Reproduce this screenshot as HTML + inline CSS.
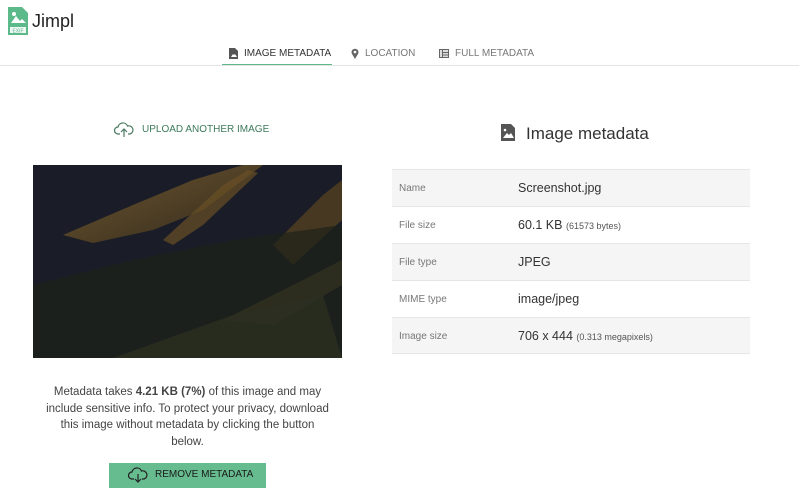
<!DOCTYPE html>
<html><head><meta charset="utf-8"><style>
*{margin:0;padding:0;box-sizing:border-box}
body{width:799px;height:500px;background:#fff;font-family:"Liberation Sans",sans-serif;position:relative;overflow:hidden;color:#333}
.abs{position:absolute}
.tab{position:absolute;top:48px;font-size:10px;color:#777;display:flex;align-items:center;gap:6px}
.row{position:absolute;left:392px;width:358px;height:37px;border-top:1px solid #e6e6e6;font-size:12.5px;color:#333}
.row.g{background:#f5f5f5}
.row .k{position:absolute;left:7px;top:13px;font-size:10px;color:#777}
.row .v{position:absolute;left:126px;top:11px}
.row small{font-size:9px;color:#555}
</style></head><body>
<svg class="abs" style="left:8px;top:7px" width="20" height="28" viewBox="0 0 20 28"><path d="M0 0h14l6 6v22H0z" fill="#5cb98a"/><path d="M3 16l5-7 4 5 2-2 4 4z" fill="#fff"/><circle cx="6" cy="7" r="2" fill="#fff"/><rect x="2" y="20" width="16" height="6" fill="#fff" opacity=".9"/><text x="10" y="25.3" font-size="5" text-anchor="middle" fill="#5cb98a" font-family="Liberation Sans">EXIF</text></svg>
<div class="abs" style="left:32px;top:11px;font-size:18px;color:#222">Jimpl</div>
<div class="tab" style="left:229px;color:#333"><svg width="9" height="11"><path d="M0 0h6l3 3v8H0z" fill="#555"/><path d="M2 9l2-3 1 1 1-1 2 3z" fill="#fff"/></svg>IMAGE METADATA</div>
<div class="abs" style="left:222px;top:64px;width:110px;height:2px;background:#5cb98a"></div>
<div class="tab" style="left:351px"><svg width="8" height="11"><path d="M4 11L1 6a3.5 3.5 0 1 1 6 0z" fill="#666"/><circle cx="4" cy="4" r="1.3" fill="#fff"/></svg>LOCATION</div>
<div class="tab" style="left:439px"><svg width="10" height="9"><rect width="10" height="9" fill="#666"/><rect x="1" y="1" width="2" height="7" fill="#ddd"/><rect x="4" y="1" width="5" height="2" fill="#ddd"/><rect x="4" y="4" width="5" height="1.5" fill="#ddd"/><rect x="4" y="6.5" width="5" height="1.5" fill="#ddd"/></svg>FULL METADATA</div>
<div class="abs" style="left:0;top:65px;width:799px;height:1px;background:#e5e5e5"></div>
<svg class="abs" style="left:114px;top:122px" width="20" height="16" viewBox="0 0 20 16"><path d="M6 12H4a3.5 3.5 0 0 1 0-7 5 5 0 0 1 9.5-1A4 4 0 0 1 16 12h-2M10 15V7M7 10l3-3 3 3" fill="none" stroke="#4a7a62" stroke-width="1.2"/></svg>
<div class="abs" style="left:142px;top:124px;font-size:10px;color:#3d7a5a">UPLOAD ANOTHER IMAGE</div>
<svg class="abs" style="left:501px;top:124px" width="14" height="17"><path d="M0 0h10l4 4v13H0z" fill="#555"/><path d="M2 14l4-5 2 2 2-2 3 5z" fill="#fff"/><circle cx="4" cy="6" r="1.3" fill="#fff"/></svg>
<div class="abs" style="left:526px;top:124px;font-size:17px;color:#333">Image metadata</div>
<div class="row g" style="top:169px"><span class="k">Name</span><span class="v">Screenshot.jpg</span></div>
<div class="row" style="top:206px"><span class="k">File size</span><span class="v">60.1 KB <small>(61573 bytes)</small></span></div>
<div class="row g" style="top:243px"><span class="k">File type</span><span class="v">JPEG</span></div>
<div class="row" style="top:280px"><span class="k">MIME type</span><span class="v">image/jpeg</span></div>
<div class="row g" style="top:317px;border-bottom:1px solid #e6e6e6"><span class="k">Image size</span><span class="v">706 x 444 <small>(0.313 megapixels)</small></span></div>
<svg class="abs" style="left:33px;top:165px" width="309" height="193" viewBox="0 0 309 193"><defs><linearGradient id="a" x1="0" y1="0" x2="1" y2="1"><stop offset="0" stop-color="#8a6a33"/><stop offset="1" stop-color="#3a2e18"/></linearGradient></defs><rect width="309" height="193" fill="#1a1d27"/><path d="M30 70L100 40 160 15 210 0 230 0 170 45 120 65 60 78z" fill="url(#a)" opacity=".75"/><path d="M130 75L190 20 215 5 225 8 170 60 140 80z" fill="#6a5025" opacity=".7"/><path d="M240 80L290 30 309 15v40L260 100z" fill="#5a4520" opacity=".7"/><path d="M190 155L260 120 309 95v25L240 160z" fill="#6a5530" opacity=".7"/><path d="M0 120L100 95 200 75 309 60v133H0z" fill="#1d2219" opacity=".7"/><path d="M80 193L200 150 290 130 309 193z" fill="#2c3020" opacity=".8"/></svg>
<div class="abs" style="left:20px;top:384px;width:335px;text-align:center;font-size:11.5px;line-height:16.5px;color:#444;white-space:nowrap">Metadata takes <b>4.21 KB (7%)</b> of this image and may<br>include sensitive info. To protect your privacy, download<br>this image without metadata by clicking the button<br>below.</div>
<div class="abs" style="left:109px;top:463px;width:157px;height:25px;background:#66bb8f"></div>
<svg class="abs" style="left:128px;top:467px" width="20" height="17" viewBox="0 0 20 17"><path d="M6 12H4a3.5 3.5 0 0 1 0-7 5 5 0 0 1 9.5-1A4 4 0 0 1 16 12h-2M10 7v8M7 12l3 3 3-3" fill="none" stroke="#222" stroke-width="1.2"/></svg>
<div class="abs" style="left:155px;top:469px;font-size:10px;color:#1a1a1a">REMOVE METADATA</div>
</body></html>
